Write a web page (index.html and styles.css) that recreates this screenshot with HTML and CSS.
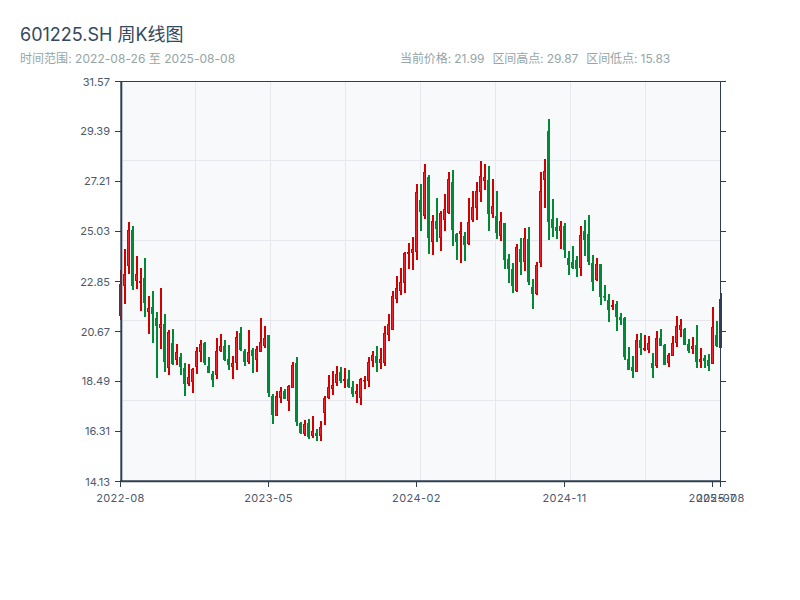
FILE: index.html
```html
<!DOCTYPE html>
<html lang="zh-CN">
<head>
<meta charset="utf-8">
<title>601225.SH 周K线图</title>
<link rel="stylesheet" href="styles.css">
</head>
<body>
<main class="page">
  <header class="header">
    <h1 class="title">601225.SH 周K线图</h1>
    <div class="meta">
      <div class="range">时间范围: 2022-08-26 至 2025-08-08</div>
      <div class="stats">
        <span>当前价格: 21.99</span>
        <span>区间高点: 29.87</span>
        <span>区间低点: 15.83</span>
      </div>
    </div>
  </header>
  <svg class="chart" width="800" height="440" viewBox="0 72 800 440">
    <rect class="plot" x="121" y="81" width="600" height="400"/>
    <path class="grid" d="M195.5 81V481M270.5 81V481M345.5 81V481M420.5 81V481M495.5 81V481M570.5 81V481M645.5 81V481M121 160.5H721M121 240.5H721M121 320.5H721M121 400.5H721"/>
    <g id="candles"></g>
    <path class="axis-thin" d="M115 81.5H726M115 131.5H121M115 181.5H121M115 231.5H121M115 281.5H121M115 331.5H121M115 381.5H121M115 431.5H121M115 481.5H121M720.5 81V481M720 131.5H726M720 181.5H726M720 231.5H726M720 281.5H726M720 331.5H726M720 381.5H726M720 431.5H726M720 481.5H726M120.5 481V487M268.5 481V487M416.5 481V487M564.5 481V487M712.5 481V487M720.5 481V487"/>
    <path class="axis-thick" d="M121.3 81V482M120 481.2H721"/>
    <g class="y-labels">
      <text x="110" y="85.5">31.57</text>
      <text x="110" y="135">29.39</text>
      <text x="110" y="185">27.21</text>
      <text x="110" y="235">25.03</text>
      <text x="110" y="285.5">22.85</text>
      <text x="110" y="335.5">20.67</text>
      <text x="110" y="385">18.49</text>
      <text x="110" y="435">16.31</text>
      <text x="110" y="485.5">14.13</text>
    </g>
    <g class="x-labels">
      <text x="120.5" y="501.5">2022-08</text>
      <text x="268.5" y="501.5">2023-05</text>
      <text x="416.5" y="501.5">2024-02</text>
      <text x="564.5" y="501.5">2024-11</text>
      <text x="712.5" y="501.5">2025-07</text>
      <text x="720.5" y="501.5">2025-08</text>
    </g>
  </svg>
</main>
<script src="script.js"></script>
</body>
</html>
```
FILE: styles.css
```css
html, body {
  margin: 0;
  padding: 0;
  background: #ffffff;
}
body {
  font-family: Inter, "Noto Sans CJK SC", sans-serif;
}
.page {
  width: 800px;
  height: 600px;
  overflow: hidden;
}
.header {
  padding: 24px 20px 0;
  height: 48px;
}
.title {
  margin: 0;
  font-size: 18px;
  font-weight: 400;
  line-height: 22px;
  color: #34495e;
}
.meta {
  display: grid;
  grid-template-columns: 380px 1fr;
  margin-top: 4px;
  font-size: 12px;
  line-height: 18px;
  color: #95a5a6;
}
.range {
  letter-spacing: 0.04px;
}
.stats {
  display: flex;
  gap: 8px;
  letter-spacing: -0.08px;
}
.chart {
  display: block;
}
.plot {
  fill: #f8f9fb;
}
.grid {
  fill: none;
  stroke: #e6e8ed;
  stroke-width: 1;
}
.axis-thin {
  fill: none;
  stroke: #2c3e50;
  stroke-width: 1;
}
.axis-thick {
  fill: none;
  stroke: #2c3e50;
  stroke-width: 2;
}
.y-labels text {
  font-size: 11px;
  fill: #4a5a6c;
  text-anchor: end;
}
.x-labels text {
  font-size: 11px;
  fill: #4a5a6c;
  letter-spacing: 0.4px;
  text-anchor: middle;
}
.wick-r { fill: #d30000; }
.wick-g { fill: #008a36; }
.body-r { fill: #f5202a; stroke: #d30000; stroke-width: 1; }
.body-g { fill: #008a36; stroke: #008a36; stroke-width: 1; }
```
FILE: script.js
```js
var data = [
["r",270,320,284,316],["r",249,304,274,286],["r",222,274,230,266],["g",226,290,230,286],["r",256,289,274,281],
["r",268,311,281,283],["g",258,317,278,303],["r",296,334,308,312],["g",291,343,307,314],["g",312,378,318,326],
["r",288,349,324,328],["g",314,372,324,362],["r",330,375,332,368],["g",329,365,343,364],["r",344,365,352,360],
["g",353,375,357,367],["g",363,396,368,384],["r",364,386,377,384],["r",368,393,369,382],["r",347,374,351,367],
["r",340,362,344,352],["g",342,365,343,363],["g",357,373,366,373],["g",371,387,374,380],["r",338,379,351,375],
["r",334,352,346,351],["g",340,361,346,360],["g",345,370,359,365],["r",356,379,363,367],["r",331,370,337,363],
["g",327,351,333,350],["g",349,366,351,362],["r",330,364,352,362],["g",348,373,350,356],["r",346,372,349,360],
["r",318,352,342,352],["r",326,348,338,346],["g",335,397,335,393],["g",394,424,396,415],["r",391,416,396,416],
["r",387,403,391,398],["g",389,399,391,399],["r",385,411,386,401],["r",362,388,365,388],["g",357,426,363,422],
["g",422,434,423,433],["r",420,436,424,434],["g",419,439,423,437],["r",416,438,431,436],["g",429,441,433,436],
["r",421,441,427,436],["r",396,425,398,413],["r",375,399,387,398],["r",371,395,385,389],["r",366,386,374,383],
["g",367,383,372,381],["r",368,388,379,381],["g",370,388,379,387],["g",381,397,387,394],["r",384,403,391,394],
["r",378,405,379,398],["r",376,389,380,381],["r",357,387,362,381],["r",351,367,355,361],["g",346,372,356,363],
["r",348,369,359,363],["r",326,366,333,363],["r",314,341,324,335],["r",291,330,296,330],["r",276,303,288,299],
["r",268,295,282,291],["r",252,293,253,283],["r",243,269,252,254],["r",237,270,249,253],["r",184,260,192,252],
["g",184,231,200,212],["r",164,219,172,216],["g",175,254,177,238],["r",215,255,221,242],["g",198,242,221,229],
["r",211,251,213,238],["r",194,231,209,220],["r",172,214,179,213],["g",170,246,182,230],["g",233,260,234,242],
["r",222,263,231,234],["g",232,261,236,245],["r",198,245,222,244],["r",191,222,207,220],["r",182,220,191,208],
["r",161,202,176,192],["r",164,190,177,181],["g",166,231,180,214],["r",179,218,206,214],["g",191,239,216,233],
["r",212,241,221,236],["g",223,269,223,260],["g",254,283,259,269],["g",263,293,269,286],["r",244,292,247,291],
["g",238,275,249,262],["r",228,271,238,262],["g",227,285,239,282],["g",279,309,287,294],["r",262,295,265,294],
["r",172,267,191,263],["r",159,208,171,180],["g",119,240,131,222],["g",199,237,219,228],["g",218,239,227,231],
["r",221,249,226,231],["g",223,258,226,250],["g",251,275,258,265],["g",246,269,262,268],["g",256,277,260,269],
["r",226,276,235,268],["g",220,256,231,240],["g",215,265,234,262],["g",255,291,263,282],["r",258,281,264,280],
["g",264,305,264,297],["g",285,301,296,297],["g",294,322,300,310],["r",300,310,305,307],["g",301,331,304,317],
["g",313,325,317,320],["g",317,360,318,357],["g",347,370,359,370],["g",356,378,367,371],["r",334,372,340,372],
["g",333,355,340,348],["r",335,351,348,350],["r",336,353,343,350],["g",353,378,363,368],["r",331,368,338,366],
["g",329,346,338,346],["g",344,365,345,365],["r",353,367,355,363],["r",336,356,343,356],["r",316,347,326,343],
["r",319,337,325,330],["g",328,345,329,345],["g",339,353,344,351],["r",337,354,346,349],["g",325,368,345,362],
["r",348,368,359,362],["g",355,368,358,361],["g",354,371,360,366],["r",307,364,327,364],["g",321,347,335,346],
["r",293,348,299,348]
];
var SVG_NS = "http://www.w3.org/2000/svg";
var layer = document.getElementById("candles");
function addRect(cls, x, y, w, h) {
  var r = document.createElementNS(SVG_NS, "rect");
  r.setAttribute("class", cls);
  r.setAttribute("x", x);
  r.setAttribute("y", y);
  r.setAttribute("width", w);
  r.setAttribute("height", h);
  layer.appendChild(r);
}
data.forEach(function (d, i) {
  var cx = 120 + 4 * i;
  addRect("wick-" + d[0], cx, d[1], 2, d[2] - d[1]);
  addRect("body-" + d[0], cx - 0.5, d[3] + 0.5, 2, Math.max(d[4] - d[3] - 1, 0.5));
});
```
